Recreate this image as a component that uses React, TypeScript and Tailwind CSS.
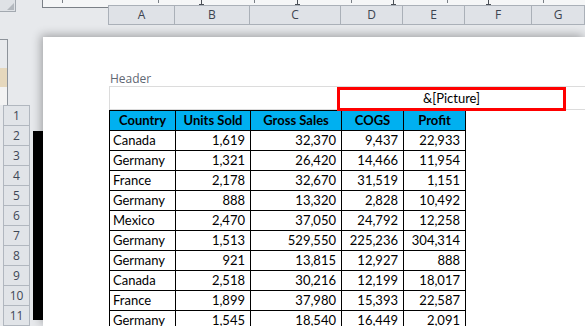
const rows = [
  ['Canada', '1,619', '32,370', '9,437', '22,933'],
  ['Germany', '1,321', '26,420', '14,466', '11,954'],
  ['France', '2,178', '32,670', '31,519', '1,151'],
  ['Germany', '888', '13,320', '2,828', '10,492'],
  ['Mexico', '2,470', '37,050', '24,792', '12,258'],
  ['Germany', '1,513', '529,550', '225,236', '304,314'],
  ['Germany', '921', '13,815', '12,927', '888'],
  ['Canada', '2,518', '30,216', '12,199', '18,017'],
  ['France', '1,899', '37,980', '15,393', '22,587'],
  ['Germany', '1,545', '18,540', '16,449', '2,091'],
];

const heads = ['Country', 'Units Sold', 'Gross Sales', 'COGS', 'Profit'];
const widths = ['w-[66px]', 'w-[75px]', 'w-[91px]', 'w-[62px]', 'w-[62px]'];

const sheetCols = [
  { label: 'A', w: 'w-[66px]' },
  { label: 'B', w: 'w-[75px]' },
  { label: 'C', w: 'w-[91px]' },
  { label: 'D', w: 'w-[62px]' },
  { label: 'E', w: 'w-[62px]' },
  { label: 'F', w: 'w-[67px]' },
  { label: 'G', w: 'flex-1' },
];

function Ruler() {
  const ticks = [19, 115, 211, 308, 404, 500];
  const digits = [158, 254, 350, 445];
  return (
    <svg width="542" height="5" className="block">
      {ticks.map((x) => (
        <rect key={'t' + x} x={x} y={0} width={1} height={3} fill="#7a7f86" />
      ))}
      {digits.map((x) => (
        <g key={'d' + x}>
          <rect x={x} y={0} width={1} height={4} fill="#4a4f56" />
          <rect x={x - 2} y={4} width={5} height={1} fill="#4a4f56" />
        </g>
      ))}
    </svg>
  );
}

export default function App() {
  return (
    <div className="w-[585px] h-[326px] overflow-hidden bg-[#e7e9ec] flex flex-col font-['Open_Sans',sans-serif]">
      {/* top: corner, ruler, column letters */}
      <div className="h-[25px] flex shrink-0">
        <div className="w-[43px]">
          <div className="w-[16px] h-[12px] bg-[#dfe2e6] border-r border-b border-[#a3a9b0]">
            <svg width="15" height="11" className="block">
              <polygon points="14,3 14,10 7,10" fill="#b3b8be" />
            </svg>
          </div>
        </div>
        <div className="flex-1 flex flex-col">
          <div className="h-[5px] bg-[#f5f6f7] border-l border-[#7b8087] overflow-hidden">
            <Ruler />
          </div>
          <div className="flex">
            <div className="w-[66px] h-[3px] bg-[#f5f6f7] border-l border-b border-[#7b8087]" />
            <div className="flex-1 h-[20px] flex border-t border-b border-l border-[#aab0b8] bg-[#dfe2e7]">
              {sheetCols.map((c) => (
                <div
                  key={c.label}
                  className={`${c.w} border-r border-[#aab0b8] flex items-center justify-center text-[12px] text-[#3d4450]`}
                >
                  {c.label}
                </div>
              ))}
            </div>
          </div>
        </div>
      </div>

      {/* body */}
      <div className="flex flex-1 min-h-0">
        {/* left strip: task pane edge + row numbers */}
        <div className="w-[33px] flex flex-col">
          <div className="mt-[14px] w-[8px] h-[71px] border-t border-r border-[#8d939a] flex flex-col">
            <div className="h-[28px] bg-[#e8eaed]" />
            <div className="h-[19px] bg-[#e6d8bd]" />
            <div className="flex-1 bg-[#f3f3f3]" />
          </div>
          <div className="ml-[3px] w-[27px] border-t border-[#b1b7bf]">
            {Array.from({ length: 11 }, (_, i) => (
              <div
                key={i}
                className="h-[20px] bg-[#e1e4e8] border-l border-r border-b border-[#b1b7bf] flex items-center justify-center text-[12px] text-[#3f4856]"
              >
                {i + 1}
              </div>
            ))}
          </div>
        </div>
        <div className="w-[10px] relative z-10">
          <div className="mt-[106px] h-[189px] bg-black" />
        </div>

        {/* page */}
        <div className="flex-1 mt-[12px] bg-white shadow-[-2px_-2px_9px_rgba(0,0,0,0.3)] pt-[34px] pl-[66px] flex flex-col">
          <div className="h-[15px] text-[12px] leading-[15px] pl-[1px] text-[#5f6773]">Header</div>
          <div className="h-[24px] flex border-t border-l border-b border-[#dcdcdc]">
            <div className="w-[227px]" />
            <div className="w-[229px] -mb-[2px] relative z-10 border-[3px] border-[#ff0000] flex items-center justify-center font-['Lato',sans-serif] text-[13px] text-black">
              &amp;[Picture]
            </div>
          </div>
          <div className="w-[357px] border-l border-t border-black font-['Lato',sans-serif] text-[13px] leading-[19px] text-black">
            <div className="flex h-[20px] bg-[#00b0f0] font-bold">
              {heads.map((h, i) => (
                <div key={h} className={`${widths[i]} border-r border-b border-black flex items-center justify-center`}>
                  {h}
                </div>
              ))}
            </div>
            {rows.map((r, ri) => (
              <div key={ri} className="flex h-[20px]">
                {r.map((v, i) => (
                  <div
                    key={i}
                    className={`${widths[i]} border-r border-b border-black flex items-center ${
                      i === 0 ? 'pl-[3px]' : 'justify-end pr-[5px]'
                    }`}
                  >
                    {v}
                  </div>
                ))}
              </div>
            ))}
          </div>
        </div>
      </div>
    </div>
  );
}
